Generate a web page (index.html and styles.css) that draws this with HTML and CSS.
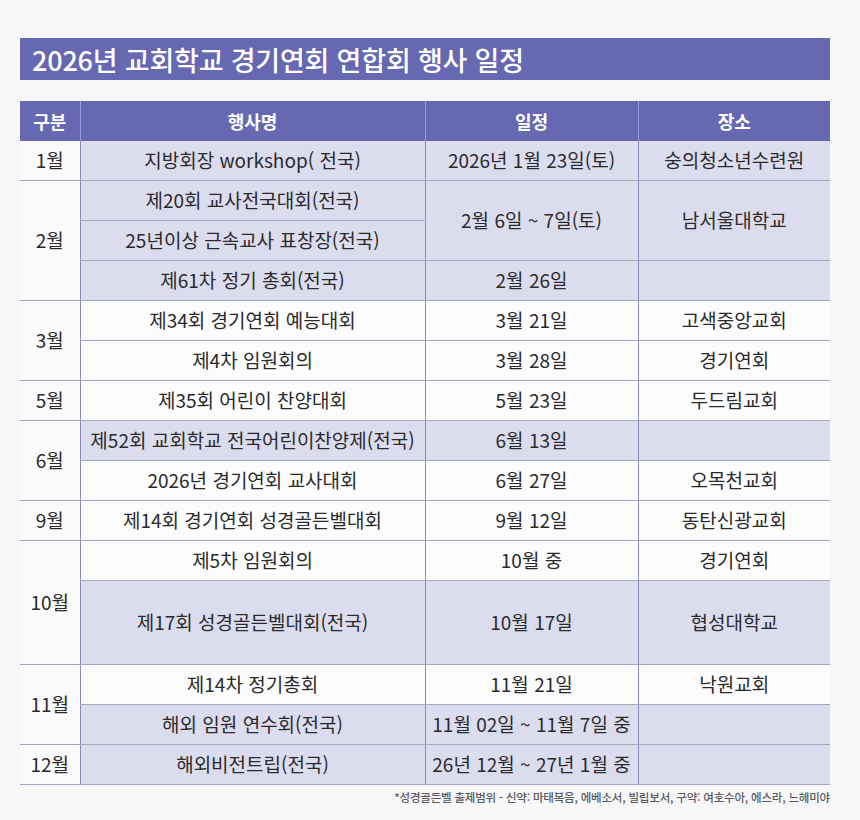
FILE: index.html
```html
<!DOCTYPE html>
<html lang="ko">
<head>
<meta charset="utf-8">
<title>2026년 교회학교 경기연회 연합회 행사 일정</title>
<link rel="stylesheet" href="styles.css">
</head>
<body>
<div class="page">
  <h1 class="title">2026년 교회학교 경기연회 연합회 행사 일정</h1>
  <table class="schedule">
    <colgroup>
      <col class="c-month">
      <col class="c-event">
      <col class="c-date">
      <col class="c-place">
    </colgroup>
    <thead>
      <tr><th>구분</th><th>행사명</th><th>일정</th><th>장소</th></tr>
    </thead>
    <tbody>
      <tr class="end">
        <td class="month">1월</td>
        <td class="hl">지방회장 workshop( 전국)</td>
        <td class="hl">2026년 1월 23일(토)</td>
        <td class="hl">숭의청소년수련원</td>
      </tr>
      <tr>
        <td class="month" rowspan="3">2월</td>
        <td class="hl">제20회 교사전국대회(전국)</td>
        <td class="hl" rowspan="2">2월 6일 ~ 7일(토)</td>
        <td class="hl" rowspan="2">남서울대학교</td>
      </tr>
      <tr>
        <td class="hl">25년이상 근속교사 표창장(전국)</td>
      </tr>
      <tr class="end">
        <td class="hl">제61차 정기 총회(전국)</td>
        <td class="hl">2월 26일</td>
        <td class="hl"></td>
      </tr>
      <tr>
        <td class="month" rowspan="2">3월</td>
        <td>제34회 경기연회 예능대회</td>
        <td>3월 21일</td>
        <td>고색중앙교회</td>
      </tr>
      <tr class="end">
        <td>제4차 임원회의</td>
        <td>3월 28일</td>
        <td>경기연회</td>
      </tr>
      <tr class="end">
        <td class="month">5월</td>
        <td>제35회 어린이 찬양대회</td>
        <td>5월 23일</td>
        <td>두드림교회</td>
      </tr>
      <tr>
        <td class="month" rowspan="2">6월</td>
        <td class="hl">제52회 교회학교 전국어린이찬양제(전국)</td>
        <td class="hl">6월 13일</td>
        <td class="hl"></td>
      </tr>
      <tr class="end">
        <td>2026년 경기연회 교사대회</td>
        <td>6월 27일</td>
        <td>오목천교회</td>
      </tr>
      <tr class="end">
        <td class="month">9월</td>
        <td>제14회 경기연회 성경골든벨대회</td>
        <td>9월 12일</td>
        <td>동탄신광교회</td>
      </tr>
      <tr>
        <td class="month" rowspan="2">10월</td>
        <td>제5차 임원회의</td>
        <td>10월 중</td>
        <td>경기연회</td>
      </tr>
      <tr class="end tall">
        <td class="hl">제17회 성경골든벨대회(전국)</td>
        <td class="hl">10월 17일</td>
        <td class="hl">협성대학교</td>
      </tr>
      <tr>
        <td class="month" rowspan="2">11월</td>
        <td>제14차 정기총회</td>
        <td>11월 21일</td>
        <td>낙원교회</td>
      </tr>
      <tr class="end">
        <td class="hl">해외 임원 연수회(전국)</td>
        <td class="hl">11월 02일 ~ 11월 7일 중</td>
        <td class="hl"></td>
      </tr>
      <tr class="end">
        <td class="month">12월</td>
        <td class="hl">해외비전트립(전국)</td>
        <td class="hl">26년 12월 ~ 27년 1월 중</td>
        <td class="hl"></td>
      </tr>
    </tbody>
  </table>
  <p class="note">*성경골든벨 출제범위 - 신약: 마태복음, 에베소서, 빌립보서, 구약: 여호수아, 에스라, 느헤미야</p>
</div>
</body>
</html>
```
FILE: styles.css
```css
html, body {
  margin: 0;
  padding: 0;
  background: #f7f7f9;
}

body {
  font-family: "Noto Sans CJK KR", "Noto Sans", sans-serif;
  color: #2a2a2a;
}

.page {
  width: 810px;
  padding: 38px 0 0 20px;
}

.title {
  margin: 0;
  height: 42px;
  display: flex;
  align-items: center;
  padding-left: 12px;
  background: #6668b2;
  color: #ffffff;
  font-size: 27px;
  font-weight: 500;
  letter-spacing: -0.2px;
  line-height: 1;
}

.schedule {
  margin-top: 21px;
  width: 810px;
  border-collapse: collapse;
  table-layout: fixed;
  font-size: 19px;
}

.c-month { width: 60px; }
.c-event { width: 345px; }
.c-date { width: 213px; }
.c-place { width: 192px; }

.schedule th {
  height: 40px;
  padding: 0;
  background: #6668b2;
  color: #ffffff;
  font-size: 18px;
  font-weight: 600;
  text-align: center;
  border-left: 1px solid #9c9ed8;
}

.schedule th:first-child {
  border-left: none;
}

.schedule td {
  height: 39px;
  padding: 0;
  text-align: center;
  vertical-align: middle;
  background: #fcfcfd;
  border-bottom: 1px solid #a4a6c8;
  border-left: 1px solid #8a8bbd;
  line-height: 1.2;
  white-space: nowrap;
}

.schedule td.month {
  border-left: none;
  background: #fbfbfc;
}

.schedule tr.tall td {
  height: 83px;
}

.schedule td.hl {
  background: #dcdcef;
}

.note {
  margin: 4px 0 0 0;
  text-align: right;
  font-size: 11.5px;
  font-weight: 500;
  color: #5a5a5a;
  letter-spacing: -0.2px;
}
```
